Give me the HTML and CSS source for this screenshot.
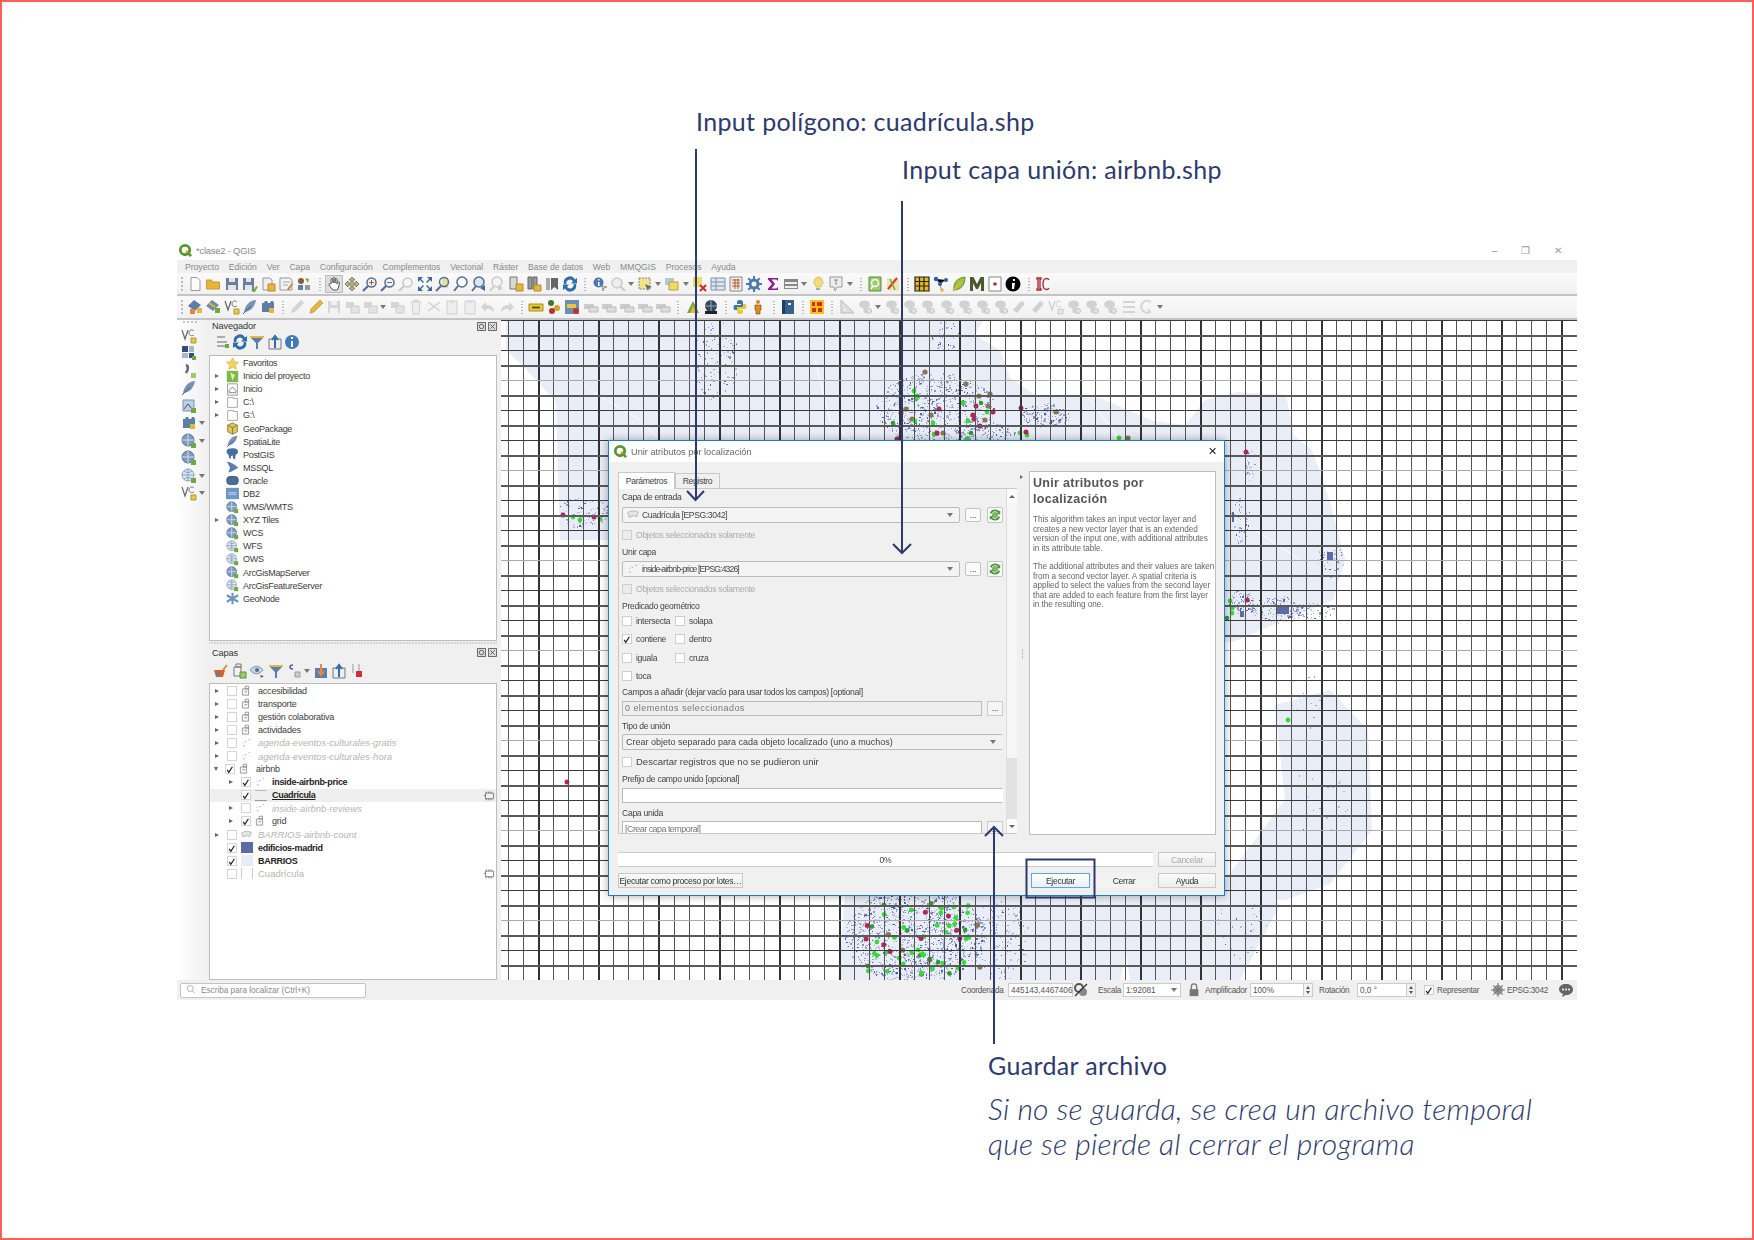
FILE: index.html
```html
<!DOCTYPE html>
<html lang="es">
<head>
<meta charset="utf-8">
<title>QGIS - Unir atributos por localización</title>
<link rel="stylesheet" href="styles.css">
</head>
<body>
<svg class="defs" aria-hidden="true">
  <symbol id="logo" viewBox="0 0 16 16"><circle cx="7.5" cy="7.5" r="5" fill="none" stroke="#589632" stroke-width="3"/><path d="M9 9l5 5" stroke="#589632" stroke-width="3"/><circle cx="9.5" cy="9.5" r="1.4" fill="#ee9a1e"/></symbol>
  <symbol id="new" viewBox="0 0 16 16"><path d="M4 1.5h6l3 3v10H4z" fill="#fff" stroke="#999"/></symbol>
  <symbol id="open" viewBox="0 0 16 16"><path d="M1.5 13V4h5l1 2h7v7z" fill="#e6b53c" stroke="#c79a2c"/></symbol>
  <symbol id="save" viewBox="0 0 16 16"><path d="M2 2h12v12H2z" fill="#6d7f97"/><path d="M5 2h6v4H5zM4 9h8v5H4z" fill="#dfe5ec"/></symbol>
  <symbol id="saveas" viewBox="0 0 16 16"><path d="M1 2h11v12H1z" fill="#6d7f97"/><path d="M4 2h5v4H4zM3 9h7v5H3z" fill="#dfe5ec"/><path d="M10 14l2 1.5 3-5" fill="none" stroke="#6fa83f" stroke-width="2"/></symbol>
  <symbol id="docy" viewBox="0 0 16 16"><path d="M3 2h7l2 2v10H3z" fill="#eee" stroke="#999"/><path d="M8 8h7v7H8z" fill="#e6b53c" stroke="#b78d23"/></symbol>
  <symbol id="print" viewBox="0 0 16 16"><path d="M2 2h10l2 2v10H2z" fill="#f4f4f4" stroke="#999"/><path d="M5 6h7M5 9h5" stroke="#9ab"/><path d="M9 13l5-6 1 1-4 6z" fill="#c5843c"/></symbol>
  <symbol id="style" viewBox="0 0 16 16"><circle cx="5" cy="5" r="3" fill="#8a5a3c"/><path d="M9 2l4 1-1 4z" fill="#6fa83f"/><path d="M2 9h5v5H2z" fill="#5b7fa8"/><path d="M9 9h5v5H9z" fill="#999"/></symbol>
  <symbol id="hand" viewBox="0 0 16 16"><path d="M5 8V3.500a1 1 0 012 0V7V2.500a1 1 0 012 0V7V3.500a1 1 0 012 0V8l1-2a1 1 0 011.500 1L12 13c-1 1.500-5 1.500-6 0L3 9c-.5-1 1-2 2-1z" fill="#fff" stroke="#555"/></symbol>
  <symbol id="pansel" viewBox="0 0 16 16"><path d="M8 1l3 3H9v3h3V5l3 3-3 3V9H9v3h2l-3 3-3-3h2V9H4v2L1 8l3-3v2h3V4H5z" fill="#e6b53c" stroke="#4f6f9a" stroke-width=".8"/></symbol>
  <symbol id="zin" viewBox="0 0 16 16"><circle cx="9.500" cy="6.500" r="4.500" fill="#f4f4f4" stroke="#4f6f9a" stroke-width="1.500"/><path d="M6 10l-5 5" stroke="#4f6f9a" stroke-width="2.200"/><path d="M7 6.500h5M9.500 4v5" stroke="#b5562c"/></symbol>
  <symbol id="zout" viewBox="0 0 16 16"><circle cx="9.500" cy="6.500" r="4.500" fill="#f4f4f4" stroke="#4f6f9a" stroke-width="1.500"/><path d="M6 10l-5 5" stroke="#4f6f9a" stroke-width="2.200"/><path d="M7 6.500h5" stroke="#b5562c"/></symbol>
  <symbol id="zfad" viewBox="0 0 16 16"><circle cx="9.500" cy="6.500" r="4.500" fill="#f6f6f6" stroke="#c9c9c9" stroke-width="1.500"/><path d="M6 10l-5 5" stroke="#c9c9c9" stroke-width="2"/></symbol>
  <symbol id="zfull" viewBox="0 0 16 16"><path d="M1 1h5L4 3l3 3-1 1-3-3-2 2zM15 1v5l-2-2-3 3-1-1 3-3-2-2zM1 15v-5l2 2 3-3 1 1-3 3 2 2zM15 15h-5l2-2-3-3 1-1 3 3 2-2z" fill="#3f6a9a"/></symbol>
  <symbol id="zlay" viewBox="0 0 16 16"><path d="M7 1h6v11H7z" fill="#eadf9a"/><circle cx="9" cy="6" r="4.500" fill="none" stroke="#4f6f9a" stroke-width="1.500"/><path d="M6 10l-5 5" stroke="#4f6f9a" stroke-width="2"/></symbol>
  <symbol id="zsel" viewBox="0 0 16 16"><circle cx="9" cy="6" r="5" fill="#fff" stroke="#4f6f9a" stroke-width="1.500"/><path d="M5 10l-4 5" stroke="#4f6f9a" stroke-width="2"/></symbol>
  <symbol id="zlast" viewBox="0 0 16 16"><circle cx="8" cy="6" r="5" fill="#dfe6ee" stroke="#4f6f9a" stroke-width="1.500"/><path d="M5 10l-4 5" stroke="#4f6f9a" stroke-width="2"/><path d="M9 12l5-3v6z" fill="#3f6a9a"/></symbol>
  <symbol id="znext" viewBox="0 0 16 16"><circle cx="8" cy="6" r="5" fill="#f4f4f4" stroke="#ccc" stroke-width="1.500"/><path d="M5 10l-4 5" stroke="#ccc" stroke-width="2"/><path d="M14 12l-5-3v6z" fill="#ccc"/></symbol>
  <symbol id="mapv" viewBox="0 0 16 16"><path d="M2 1h7v12H2z" fill="#d8d8d8" stroke="#777"/><path d="M8 8h7v7H8z" fill="#e6b53c" stroke="#b78d23"/></symbol>
  <symbol id="map3" viewBox="0 0 16 16"><path d="M2 1h4v12H2zM7 1h4v12H7z" fill="#999" stroke="#666"/><path d="M8 9h7v6H8z" fill="#e6b53c" stroke="#b78d23"/></symbol>
  <symbol id="book" viewBox="0 0 16 16"><path d="M2 2h4v12H2z" fill="#aaa"/><path d="M7 2h7v12l-3.500-3L7 14z" fill="#666"/></symbol>
  <symbol id="refresh" viewBox="0 0 16 16"><path d="M13 3.500A6 6 0 002 8h2.500A3.500 3.500 0 0111 5.500L9 7.500h6V2zM3 12.500A6 6 0 0014 8h-2.500A3.500 3.500 0 015 10.500l2-2H1V14z" fill="#2f6da8"/></symbol>
  <symbol id="ident" viewBox="0 0 16 16"><circle cx="6.500" cy="6.500" r="5" fill="#4f79aa"/><path d="M6 3h1.500v1.500H6zM6 6h1.500v4H6z" fill="#fff"/><path d="M10 10l5 1-3 1-1 3z" fill="#ddd" stroke="#666" stroke-width=".6"/></symbol>
  <symbol id="selfad" viewBox="0 0 16 16"><circle cx="7" cy="7" r="5" fill="#eee" stroke="#ccc" stroke-width="1.500"/><path d="M10 10l5 5" stroke="#ccc" stroke-width="2"/></symbol>
  <symbol id="sel" viewBox="0 0 16 16"><path d="M2 2h11v11H2z" fill="#f2e48e" stroke="#888" stroke-dasharray="2 1"/><path d="M8 8l7 3-3 1-1 3z" fill="#666"/></symbol>
  <symbol id="sel2" viewBox="0 0 16 16"><path d="M1 2h9v7H1z" fill="#b5c7dc"/><path d="M5 6h9v8H5z" fill="#efdc68" stroke="#b8a33a"/></symbol>
  <symbol id="desel" viewBox="0 0 16 16"><path d="M1 1h9v10H1z" fill="#efdc68"/><path d="M8 9l6 6M14 9l-6 6" stroke="#cf2a2a" stroke-width="2"/></symbol>
  <symbol id="table" viewBox="0 0 16 16"><path d="M1 2h14v12H1z" fill="#dfe6ef" stroke="#7d93ad"/><path d="M1 6h14M1 10h14M6 2v12" stroke="#7d93ad"/></symbol>
  <symbol id="calc" viewBox="0 0 16 16"><path d="M2 1h12v14H2z" fill="#eee" stroke="#888"/><path d="M4 4h8M4 7h8M4 10h8M7 3v10M10 3v10" stroke="#b5562c"/></symbol>
  <symbol id="gear" viewBox="0 0 16 16"><circle cx="8" cy="8" r="4" fill="none" stroke="#4f79aa" stroke-width="3"/><path d="M8 0v3M8 13v3M0 8h3M13 8h3M2.300 2.300l2 2M11.700 11.700l2 2M13.700 2.300l-2 2M4.300 11.700l-2 2" stroke="#4f79aa" stroke-width="2"/></symbol>
  <symbol id="sum" viewBox="0 0 16 16"><path d="M3 2h10v3l-1.500-1.500H6.500L10 8l-3.500 4.500h5L13 11v3H3v-1.500L7 8 3 3.500z" fill="#8d1c8d"/></symbol>
  <symbol id="stat" viewBox="0 0 16 16"><path d="M1 3h14v10H1z" fill="#888"/><path d="M2 6h12v2H2zM2 10h12v2H2z" fill="#eee"/></symbol>
  <symbol id="tip" viewBox="0 0 16 16"><path d="M8 1a5 5 0 013 9v1H6v-1A5 5 0 018 1z" fill="#f0dc7a" stroke="#cfb850" stroke-width=".7"/><path d="M6 12h4v2H6z" fill="#aaa"/></symbol>
  <symbol id="note" viewBox="0 0 16 16"><path d="M2 1h12v10H9l-2 4-1-4H2z" fill="#eee" stroke="#999"/><path d="M6 4h4M8 4v5" stroke="#888"/></symbol>
  <symbol id="grn" viewBox="0 0 16 16"><path d="M2 1h12v14H2z" fill="#9ccb6f" stroke="#5f8f3a"/><circle cx="8" cy="7" r="3.500" fill="none" stroke="#fff" stroke-width="1.500"/><path d="M6 10l-2 3" stroke="#fff" stroke-width="1.500"/></symbol>
  <symbol id="foldmap" viewBox="0 0 16 16"><path d="M2 2l4 1 4-1 4 1v12l-4-1-4 1-4-1z" fill="#efe3b0"/><path d="M3 13l9-11" stroke="#d8392f" stroke-width="2"/><path d="M5 3l5 11" stroke="#6fa83f" stroke-width="1.500"/></symbol>
  <symbol id="grid" viewBox="0 0 16 16"><path d="M1 1h14v14H1z" fill="#e5b91f"/><path d="M1 1h14v14H1zM1 5.500h14M1 10h14M5.500 1v14M10 1v14" fill="none" stroke="#222" stroke-width="1.200"/></symbol>
  <symbol id="net" viewBox="0 0 16 16"><path d="M3 3l4 5 6-4M7 8l1 5" stroke="#7b99bc"/><circle cx="3" cy="3" r="2.200" fill="#2f5f9e"/><circle cx="13" cy="4" r="2" fill="#2f5f9e"/><circle cx="7" cy="8" r="2" fill="#2f5f9e"/><circle cx="9" cy="14" r="1.800" fill="#e6b53c"/></symbol>
  <symbol id="leaf" viewBox="0 0 16 16"><path d="M14 1C6 2 2 7 3 14c7 0 11-5 11-13z" fill="#9cc43a" stroke="#5f8f3a"/><path d="M2 15l8-9" stroke="#e6b53c" stroke-width="1.500"/></symbol>
  <symbol id="em" viewBox="0 0 16 16"><path d="M1 15V1h3.500L8 8l3.500-7H15v14h-3V7l-3 6H7L4 7v8z" fill="#4a5a2a"/></symbol>
  <symbol id="rdot" viewBox="0 0 16 16"><path d="M2 1h12v14H2z" fill="#fff" stroke="#888"/><circle cx="8" cy="8" r="1.800" fill="#b03030"/></symbol>
  <symbol id="ibl" viewBox="0 0 16 16"><circle cx="8" cy="8" r="7.500" fill="#000"/><path d="M8 3h2v2H8zM7 7h3l-1 6H7z" fill="#fff"/></symbol>
  <symbol id="ic" viewBox="0 0 16 16"><path d="M2 2h4v1H5v10h1v1H2v-1h1V3H2zM14 4c-1-2-6-3-6 4 0 7 5 6 6 4" fill="none" stroke="#a83232" stroke-width="1.400"/></symbol>
  <symbol id="addcap" viewBox="0 0 16 16"><path d="M7 1l7 5-6 6-7-5z" fill="#5b7fa8"/><path d="M3 10h5v5H3z" fill="#e6883c"/><path d="M10 9h5v5h-5z" fill="#e6b53c"/></symbol>
  <symbol id="addcap2" viewBox="0 0 16 16"><path d="M7 1l7 5-6 6-7-5z" fill="#6f8ea8"/><path d="M4 4l6 4" stroke="#e6b53c" stroke-width="2"/><path d="M10 9h5v5h-5z" fill="#6fa83f"/></symbol>
  <symbol id="vc" viewBox="0 0 16 16"><path d="M1 2l3 9 3-9" fill="none" stroke="#666" stroke-width="1.200"/><path d="M13 3c-2-2-5-1-5 2s3 3 5 2" fill="none" stroke="#777"/><path d="M10 10h5v5h-5z" fill="#e6c84a" stroke="#b8982e"/></symbol>
  <symbol id="feather" viewBox="0 0 16 16"><path d="M14 1C8 1 3 6 2 13c6 0 11-5 12-12z" fill="#7894b4"/><path d="M1 15l8-8" stroke="#44607f"/></symbol>
  <symbol id="db" viewBox="0 0 16 16"><path d="M2 4h2l1-2h2l1 2h2l1-2h2l1 2v9H2z" fill="#5b7fa8"/><path d="M9 9h5v5H9z" fill="#e6b53c"/></symbol>
  <symbol id="penfad" viewBox="0 0 16 16"><path d="M12 1l3 3-9 9-4 1 1-4z" fill="#d4d4d4"/></symbol>
  <symbol id="pen" viewBox="0 0 16 16"><path d="M12 1l3 3-9 9-4 1 1-4z" fill="#e6b53c" stroke="#a8842b" stroke-width=".6"/></symbol>
  <symbol id="savef" viewBox="0 0 16 16"><path d="M2 2h12v12H2z" fill="#d6d6d6"/><path d="M5 2h6v4H5zM4 9h8v5H4z" fill="#f2f2f2"/></symbol>
  <symbol id="fad1" viewBox="0 0 16 16"><path d="M2 3h8v6H2z" fill="#d6d6d6"/><path d="M7 7h8v7H7z" fill="#e4e4e4" stroke="#ccc"/></symbol>
  <symbol id="trash" viewBox="0 0 16 16"><path d="M3 3h10M6 3V1h4v2M4 3l1 12h6l1-12" fill="#eee" stroke="#cfcfcf"/></symbol>
  <symbol id="cut" viewBox="0 0 16 16"><path d="M2 3l12 9M14 3L2 12" stroke="#d4d4d4" stroke-width="1.500"/></symbol>
  <symbol id="paste" viewBox="0 0 16 16"><path d="M3 2h10v13H3z" fill="#eee" stroke="#d0d0d0"/><path d="M6 1h4v3H6z" fill="#ddd"/></symbol>
  <symbol id="undo" viewBox="0 0 16 16"><path d="M6 3L1 8l5 5v-3c3 0 5 0 8 3 0-5-3-7-8-7z" fill="#d4d4d4"/></symbol>
  <symbol id="redo" viewBox="0 0 16 16"><path d="M10 3l5 5-5 5v-3c-3 0-5 0-8 3 0-5 3-7 8-7z" fill="#d4d4d4"/></symbol>
  <symbol id="lbl" viewBox="0 0 16 16"><path d="M1 5h14v7H1z" fill="#e8c83a" stroke="#a88c1e"/><path d="M4 8.500h8" stroke="#6b5a12" stroke-width="2"/></symbol>
  <symbol id="pts" viewBox="0 0 16 16"><circle cx="5" cy="4" r="3" fill="#3f7a2f"/><circle cx="11" cy="9" r="3" fill="#d3a520"/><circle cx="6" cy="12" r="3" fill="#b33"/></symbol>
  <symbol id="lblb" viewBox="0 0 16 16"><path d="M1 1h14v14H1z" fill="#6d8fb5"/><path d="M3 5h9v4H3z" fill="#e8c83a"/><circle cx="12" cy="12" r="3" fill="#b33"/></symbol>
  <symbol id="lblf" viewBox="0 0 16 16"><path d="M1 5h10v5H1z" fill="#ccc"/><path d="M6 8h9v5H6z" fill="#ddd" stroke="#bbb"/></symbol>
  <symbol id="tri" viewBox="0 0 16 16"><path d="M8 2l6 12H2z" fill="#6fa83f"/><path d="M8 6l3 8H5z" fill="#e6b53c"/></symbol>
  <symbol id="globed" viewBox="0 0 16 16"><circle cx="8" cy="7" r="6" fill="#33475f"/><path d="M2 7h12M8 1v12" stroke="#9ab"/><path d="M2 12h12v3H2z" fill="#222"/></symbol>
  <symbol id="py" viewBox="0 0 16 16"><path d="M8 1c-3 0-3 1-3 3v1h4v1H3c-2 0-2 5 0 5h2V8h5c1 0 1-1 1-2V3c0-1-1-2-3-2z" fill="#3d75a6"/><path d="M8 15c3 0 3-1 3-3v-1H7v-1h6c2 0 2-5 0-5h-2v3H6c-1 0-1 1-1 2v3c0 1 1 2 3 2z" fill="#e8c83a"/></symbol>
  <symbol id="man" viewBox="0 0 16 16"><circle cx="8" cy="3" r="2" fill="#d2862c"/><path d="M5 6h6v5H10v4H6v-4H5z" fill="#e28b1c" stroke="#6a4511" stroke-width=".6"/></symbol>
  <symbol id="bluebook" viewBox="0 0 16 16"><path d="M2 1h12v14H2z" fill="#35618f"/><path d="M2 1h3v14H2z" fill="#1f3f60"/><path d="M8 4h3v2H8z" fill="#fff"/></symbol>
  <symbol id="mm" viewBox="0 0 16 16"><path d="M1 1h14v14H1z" fill="#f2c31b"/><path d="M3 3h3v4H3zM8 3h5v4H8zM3 9h4v4H3zM9 9h4v4H9z" fill="#d62b1f"/></symbol>
  <symbol id="ruler" viewBox="0 0 16 16"><path d="M2 1v13h13z" fill="#ddd" stroke="#bbb"/><path d="M5 9v3h3z" fill="#f0f0f0"/></symbol>
  <symbol id="blob" viewBox="0 0 16 16"><path d="M3 3c2-2 7-2 9 0 2 3 0 6-2 6l1 5H7L6 9C3 9 1 6 3 3z" fill="#d2d2d2"/><circle cx="12" cy="12" r="2.500" fill="#e4e4e4" stroke="#c4c4c4"/></symbol>
  <symbol id="blob2" viewBox="0 0 16 16"><path d="M2 11L9 3c3-2 5 0 4 3L6 14z" fill="#d2d2d2"/></symbol>
  <symbol id="vcf" viewBox="0 0 16 16"><path d="M1 2l3 9 3-9" fill="none" stroke="#ccc" stroke-width="1.200"/><path d="M13 3c-2-2-5-1-5 2s3 3 5 2" fill="none" stroke="#ccc"/><path d="M10 10h5v5h-5z" fill="#e4e4e4" stroke="#ccc"/></symbol>
  <symbol id="lines" viewBox="0 0 16 16"><path d="M2 3h12M2 8h12M2 13h12" stroke="#d4d4d4" stroke-width="2"/></symbol>
  <symbol id="rotf" viewBox="0 0 16 16"><path d="M12 3a6 6 0 10-1 10L9 10" fill="none" stroke="#d4d4d4" stroke-width="2"/></symbol>
  <symbol id="tilesg" viewBox="0 0 16 16"><path d="M1 1h6v6H1zM8 8h5v5H8z" fill="#2f4f76"/><path d="M8 1h5v6H8zM1 8h6v5H1z" fill="#a6b8cc"/><path d="M11 11h4v4h-4z" fill="#6fa83f"/></symbol>
  <symbol id="pg" viewBox="0 0 16 16"><path d="M3 1c3-1 9-1 11 1s0 6-2 6l-1 6-2-1-1-4-2 1v3H4l-1-5C0 7 0 2 3 1z" fill="#47709f"/></symbol>
  <symbol id="vt" viewBox="0 0 16 16"><path d="M5 2c3 1 2 5 0 8" fill="none" stroke="#667" stroke-width="2.500"/><path d="M10 10h5v5h-5z" fill="#9ccb6f"/></symbol>
  <symbol id="raster" viewBox="0 0 16 16"><path d="M2 2h11v11H2z" fill="#bcd0e6" stroke="#7d93ad"/><path d="M3 11l4-5 4 5" fill="none" stroke="#547"/><path d="M10 10h5v5h-5z" fill="#6fa83f"/></symbol>
  <symbol id="globe" viewBox="0 0 16 16"><circle cx="7" cy="7" r="6" fill="#7d9cbe" stroke="#4f6f9a"/><path d="M1 7h12M7 1v12" stroke="#dde"/><path d="M10 10h5v5h-5z" fill="#6fa83f"/></symbol>
  <symbol id="globel" viewBox="0 0 16 16"><circle cx="7" cy="7" r="6" fill="#dce6f1" stroke="#8aa3bf"/><path d="M1 7h12M7 1v12M3 3c3 2 5 2 8 0M3 11c3-2 5-2 8 0" stroke="#8aa3bf" fill="none"/><path d="M10 10h5v5h-5z" fill="#6fa83f"/></symbol>
  <symbol id="star" viewBox="0 0 16 16"><path d="M8 1l2.200 4.800 5.200.6-3.900 3.500 1.100 5.100L8 12.400 3.400 15l1.100-5.100L.6 6.400l5.200-.6z" fill="#f3d55b" stroke="#c9a22c" stroke-width=".7"/></symbol>
  <symbol id="proj" viewBox="0 0 16 16"><path d="M1 1h14v14H1z" fill="#7cb84a"/><path d="M5 3l6 3-3 7z" fill="#e8f0a0"/></symbol>
  <symbol id="home" viewBox="0 0 16 16"><path d="M2 1h12v14H2z" fill="#fff" stroke="#888"/><path d="M4 9l4-4 4 4v3H4z" fill="none" stroke="#666"/></symbol>
  <symbol id="folder" viewBox="0 0 16 16"><path d="M2 2h7v1h5v11H2z" fill="#fff" stroke="#999"/></symbol>
  <symbol id="gpkg" viewBox="0 0 16 16"><path d="M8 1l6 3v8l-6 3-6-3V4z" fill="#e6c84a" stroke="#8a7420"/><path d="M2 4l6 3 6-3M8 7v8" fill="none" stroke="#4f6f9a"/></symbol>
  <symbol id="mssql" viewBox="0 0 16 16"><path d="M1 1c5 0 9 3 14 7-4 3-9 6-12 6l2-6z" fill="#5b7fa8"/></symbol>
  <symbol id="oracle" viewBox="0 0 16 16"><rect x="1" y="3" width="14" height="10" rx="4" fill="#4a6f97" stroke="#2f4d70"/></symbol>
  <symbol id="db2" viewBox="0 0 16 16"><path d="M0 1h16v14H0z" fill="#6f97c6"/><path d="M3 7h10M3 9h10" stroke="#cfdcee"/></symbol>
  <symbol id="geonode" viewBox="0 0 16 16"><path d="M8 1v14M1 4l14 8M1 12l14-8" stroke="#6a93bd" stroke-width="2.500"/></symbol>
  <symbol id="collapse" viewBox="0 0 16 16"><path d="M3 3h8M3 12h8M3 8h10" stroke="#666"/><path d="M11 10h4v4h-4z" fill="#6fa83f"/></symbol>
  <symbol id="filter" viewBox="0 0 16 16"><path d="M1 2h14v2H1z" fill="#e6b53c"/><path d="M2 4h12L9 9v6H7V9z" fill="#5b7fa8"/></symbol>
  <symbol id="collall" viewBox="0 0 16 16"><path d="M2 5h12v10H2z" fill="#eee" stroke="#777"/><path d="M8 14V4M5 6l3-4 3 4" fill="none" stroke="#2f6da8" stroke-width="2"/></symbol>
  <symbol id="info" viewBox="0 0 16 16"><circle cx="8" cy="8" r="7" fill="#3f7ab5"/><path d="M7 3h2v2H7zM7 7h2v6H7z" fill="#fff"/></symbol>
  <symbol id="paint" viewBox="0 0 16 16"><path d="M1 7h11l-2 7H3z" fill="#d8602a"/><path d="M3 9h4v3H3z" fill="#5b7fa8"/><path d="M10 7l4-5" stroke="#c79a2c" stroke-width="2"/></symbol>
  <symbol id="addg" viewBox="0 0 16 16"><path d="M3 4h7v9H3zM5 1h5v3H5z" fill="#f2f2f2" stroke="#777"/><path d="M9 9h6v6H9z" fill="#9ccb6f" stroke="#5f8f3a"/></symbol>
  <symbol id="eye" viewBox="0 0 16 16"><path d="M1 7c4-5 9-5 13 0-4 5-9 5-13 0z" fill="#c7d4e2" stroke="#7d93ad"/><circle cx="8" cy="7" r="2" fill="#4f6f9a"/><path d="M11 12l4 1-3 2z" fill="#666"/></symbol>
  <symbol id="exprf" viewBox="0 0 16 16"><path d="M7 2C3 2 3 6 7 6" fill="none" stroke="#6a4f96" stroke-width="1.500"/><path d="M9 9h5v5H9z" fill="#ccc" stroke="#999"/></symbol>
  <symbol id="expall" viewBox="0 0 16 16"><path d="M2 5h12v10H2z" fill="#5b7fa8"/><path d="M8 1v10M5 8l3 4 3-4" fill="none" stroke="#e6883c" stroke-width="2"/></symbol>
  <symbol id="rm" viewBox="0 0 16 16"><path d="M3 1v9M9 1v9" stroke="#999"/><path d="M6 8h6v6H6z" fill="#d62b3b"/></symbol>
  <symbol id="groupi" viewBox="0 0 16 16"><path d="M2 5h9v9H2zM6 1h5v4H6z" fill="#f6f6f6" stroke="#777"/><path d="M5 9h4" stroke="#777"/></symbol>
  <symbol id="ptsf" viewBox="0 0 16 16"><circle cx="4" cy="12" r="1" fill="#aaa"/><circle cx="7" cy="6" r="1" fill="#aaa"/><circle cx="12" cy="3" r="1" fill="#aaa"/><circle cx="3" cy="7" r=".8" fill="#bbb"/></symbol>
  <symbol id="indic" viewBox="0 0 16 16"><path d="M3 5h10v7H3z" fill="none" stroke="#667"/><path d="M4 3v2M7 3v2M10 3v2M4 12v2M7 12v2M10 12v2M1 8h2" stroke="#667"/></symbol>
  <symbol id="polyc" viewBox="0 0 16 16"><path d="M1 5c3-3 10-3 14-1l-2 6-5-1-5 2z" fill="#e4e4e4" stroke="#aaa"/></symbol>
  <symbol id="chk" viewBox="0 0 10 10"><path d="M1.500 5.500l2 3 4.500-7" fill="none" stroke="#222" stroke-width="1.500"/></symbol>
  <symbol id="runb" viewBox="0 0 16 16"><circle cx="8" cy="8" r="3.500" fill="#7fb56a"/><path d="M12.500 5A5.500 5.500 0 003 6M3.500 11A5.500 5.500 0 0013 10" fill="none" stroke="#4f9a3a" stroke-width="2.200"/><path d="M14 2.500v4.500h-4.500zM2 13.500V9h4.500z" fill="#4f9a3a"/></symbol>
  <symbol id="mag" viewBox="0 0 16 16"><circle cx="7" cy="6" r="4" fill="none" stroke="#999"/><path d="M10 9l3 3" stroke="#999"/></symbol>
  <symbol id="lock" viewBox="0 0 16 16"><path d="M5 7V4a3 3 0 016 0v3" fill="none" stroke="#777" stroke-width="1.500"/><path d="M3 7h10v8H3z" fill="#777"/></symbol>
  <symbol id="crs" viewBox="0 0 16 16"><circle cx="8" cy="8" r="5" fill="#999"/><path d="M1 8h14M8 1v14M3 3l10 10M13 3L3 13" stroke="#777"/></symbol>
  <symbol id="msg" viewBox="0 0 16 16"><path d="M8 2c4 0 7 2 7 5.500S12 13 8 13l-4 2 1-3C3 11 1 10 1 7.500 1 4 4 2 8 2z" fill="#666"/><circle cx="5" cy="7.500" r="1" fill="#fff"/><circle cx="8" cy="7.500" r="1" fill="#fff"/><circle cx="11" cy="7.500" r="1" fill="#fff"/></symbol>
  <symbol id="toggle" viewBox="0 0 16 16"><circle cx="6" cy="6" r="4" fill="none" stroke="#555" stroke-width="2"/><circle cx="10" cy="10" r="4" fill="#888"/><path d="M2 14L14 2" stroke="#333" stroke-width="1.300"/></symbol>
  <symbol id="dock" viewBox="0 0 10 10"><path d="M.5.5h9v9h-9z" fill="#ddd" stroke="#555"/><path d="M2.500 2.500l5 5M7.500 2.500l-5 5" stroke="#555"/></symbol>
  <symbol id="dock2" viewBox="0 0 10 10"><path d="M.5.5h9v9h-9z" fill="#ddd" stroke="#555"/><circle cx="5" cy="5" r="2.500" fill="none" stroke="#555"/></symbol>
</svg>

<main class="page">
  <section class="qgis">
    <header class="titlebar">
      <svg class="logo"><use href="#logo"/></svg>
      <span class="title">*clase2 - QGIS</span>
      <span class="winbtns"><span>–</span><span>❐</span><span>✕</span></span>
    </header>
    <nav class="menubar">
      <span>Proyecto</span><span>Edición</span><span>Ver</span><span>Capa</span><span>Configuración</span><span>Complementos</span><span>Vectorial</span><span>Ráster</span><span>Base de datos</span><span>Web</span><span>MMQGIS</span><span>Procesos</span><span>Ayuda</span>
    </nav>
    <div class="toolbar">
      <i class="grip"></i>
      <svg class="i"><use href="#new"/></svg><svg class="i"><use href="#open"/></svg><svg class="i"><use href="#save"/></svg><svg class="i"><use href="#saveas"/></svg><svg class="i"><use href="#docy"/></svg><svg class="i"><use href="#print"/></svg><svg class="i"><use href="#style"/></svg>
      <i class="sep"></i>
      <span class="active"><svg class="i"><use href="#hand"/></svg></span><svg class="i"><use href="#pansel"/></svg><svg class="i"><use href="#zin"/></svg><svg class="i"><use href="#zout"/></svg><svg class="i"><use href="#zfad"/></svg><svg class="i"><use href="#zfull"/></svg><svg class="i"><use href="#zlay"/></svg><svg class="i"><use href="#zsel"/></svg><svg class="i"><use href="#zlast"/></svg><svg class="i"><use href="#znext"/></svg><svg class="i"><use href="#mapv"/></svg><svg class="i"><use href="#map3"/></svg><svg class="i"><use href="#book"/></svg><svg class="i"><use href="#refresh"/></svg>
      <i class="sep"></i>
      <svg class="i"><use href="#ident"/></svg><svg class="i"><use href="#selfad"/></svg><b class="dd"></b><svg class="i"><use href="#sel"/></svg><b class="dd"></b><svg class="i"><use href="#sel2"/></svg><b class="dd"></b><svg class="i"><use href="#desel"/></svg><svg class="i"><use href="#table"/></svg><svg class="i"><use href="#calc"/></svg><svg class="i"><use href="#gear"/></svg><svg class="i"><use href="#sum"/></svg><svg class="i"><use href="#stat"/></svg><b class="dd"></b><svg class="i"><use href="#tip"/></svg><svg class="i"><use href="#note"/></svg><b class="dd"></b>
      <i class="sep"></i>
      <svg class="i"><use href="#grn"/></svg><svg class="i"><use href="#foldmap"/></svg>
      <i class="sep"></i>
      <svg class="i"><use href="#grid"/></svg><svg class="i"><use href="#net"/></svg><svg class="i"><use href="#leaf"/></svg><svg class="i"><use href="#em"/></svg><svg class="i"><use href="#rdot"/></svg><svg class="i"><use href="#ibl"/></svg>
      <i class="sep"></i>
      <svg class="i"><use href="#ic"/></svg>
    </div>
    <div class="toolbar">
      <i class="grip"></i>
      <svg class="i"><use href="#addcap"/></svg><svg class="i"><use href="#addcap2"/></svg><svg class="i"><use href="#vc"/></svg><svg class="i"><use href="#feather"/></svg><svg class="i"><use href="#db"/></svg>
      <i class="sep"></i>
      <svg class="i"><use href="#penfad"/></svg><svg class="i"><use href="#pen"/></svg><svg class="i"><use href="#savef"/></svg><svg class="i"><use href="#fad1"/></svg><svg class="i"><use href="#fad1"/></svg><b class="dd"></b><svg class="i"><use href="#fad1"/></svg><svg class="i"><use href="#trash"/></svg><svg class="i"><use href="#cut"/></svg><svg class="i"><use href="#paste"/></svg><svg class="i"><use href="#paste"/></svg><svg class="i"><use href="#undo"/></svg><svg class="i"><use href="#redo"/></svg>
      <i class="sep"></i>
      <svg class="i"><use href="#lbl"/></svg><svg class="i"><use href="#pts"/></svg><svg class="i"><use href="#lblb"/></svg><svg class="i"><use href="#lblf"/></svg><svg class="i"><use href="#lblf"/></svg><svg class="i"><use href="#lblf"/></svg><svg class="i"><use href="#lblf"/></svg><svg class="i"><use href="#lblf"/></svg>
      <i class="sep"></i>
      <svg class="i"><use href="#tri"/></svg><svg class="i"><use href="#globed"/></svg>
      <i class="sep"></i>
      <svg class="i"><use href="#py"/></svg><svg class="i"><use href="#man"/></svg>
      <i class="sep"></i>
      <svg class="i"><use href="#bluebook"/></svg>
      <i class="sep"></i>
      <svg class="i"><use href="#mm"/></svg>
      <i class="sep"></i>
      <svg class="i"><use href="#ruler"/></svg><svg class="i"><use href="#blob"/></svg><b class="dd"></b><svg class="i"><use href="#blob"/></svg><svg class="i"><use href="#blob"/></svg><svg class="i"><use href="#blob"/></svg><svg class="i"><use href="#blob"/></svg><svg class="i"><use href="#blob"/></svg><svg class="i"><use href="#blob"/></svg><svg class="i"><use href="#blob"/></svg><svg class="i"><use href="#blob2"/></svg><svg class="i"><use href="#blob2"/></svg><svg class="i"><use href="#vcf"/></svg><svg class="i"><use href="#blob"/></svg><svg class="i"><use href="#blob"/></svg><svg class="i"><use href="#blob"/></svg><svg class="i"><use href="#lines"/></svg><svg class="i"><use href="#rotf"/></svg><b class="dd"></b>
    </div>

    <div class="workspace">
      <aside class="sidestrip">
        <i class="hgrip"></i>
        <div class="sideitem"><svg class="i"><use href="#vc"/></svg></div>
        <div class="sideitem"><svg class="i"><use href="#tilesg"/></svg></div>
        <div class="sideitem"><svg class="i"><use href="#vt"/></svg></div>
        <div class="sideitem"><svg class="i"><use href="#feather"/></svg></div>
        <div class="sideitem"><svg class="i"><use href="#raster"/></svg></div>
        <div class="sideitem"><svg class="i"><use href="#db"/></svg><b class="dd"></b></div>
        <div class="sideitem"><svg class="i"><use href="#globe"/></svg><b class="dd"></b></div>
        <div class="sideitem"><svg class="i"><use href="#globe"/></svg></div>
        <div class="sideitem"><svg class="i"><use href="#globel"/></svg><b class="dd"></b></div>
        <div class="sideitem"><svg class="i"><use href="#vc"/></svg><b class="dd"></b></div>
      </aside>

      <div class="panels">
        <section class="panel nav-panel">
          <div class="panel-head"><span>Navegador</span><span class="dockbtns"><svg><use href="#dock2"/></svg><svg><use href="#dock"/></svg></span></div>
          <div class="paneltools"><svg class="i"><use href="#collapse"/></svg><svg class="i"><use href="#refresh"/></svg><svg class="i"><use href="#filter"/></svg><svg class="i"><use href="#collall"/></svg><svg class="i"><use href="#info"/></svg></div>
          <div class="tree nav-tree">
            <div class="row"><b class="arr none"></b><svg class="ti"><use href="#star"/></svg><span>Favoritos</span></div>
            <div class="row"><b class="arr"></b><svg class="ti"><use href="#proj"/></svg><span>Inicio del proyecto</span></div>
            <div class="row"><b class="arr"></b><svg class="ti"><use href="#home"/></svg><span>Inicio</span></div>
            <div class="row"><b class="arr"></b><svg class="ti"><use href="#folder"/></svg><span>C:\</span></div>
            <div class="row"><b class="arr"></b><svg class="ti"><use href="#folder"/></svg><span>G:\</span></div>
            <div class="row"><b class="arr none"></b><svg class="ti"><use href="#gpkg"/></svg><span>GeoPackage</span></div>
            <div class="row"><b class="arr none"></b><svg class="ti"><use href="#feather"/></svg><span>SpatiaLite</span></div>
            <div class="row"><b class="arr none"></b><svg class="ti"><use href="#pg"/></svg><span>PostGIS</span></div>
            <div class="row"><b class="arr none"></b><svg class="ti"><use href="#mssql"/></svg><span>MSSQL</span></div>
            <div class="row"><b class="arr none"></b><svg class="ti"><use href="#oracle"/></svg><span>Oracle</span></div>
            <div class="row"><b class="arr none"></b><svg class="ti"><use href="#db2"/></svg><span>DB2</span></div>
            <div class="row"><b class="arr none"></b><svg class="ti"><use href="#globe"/></svg><span>WMS/WMTS</span></div>
            <div class="row"><b class="arr"></b><svg class="ti"><use href="#globe"/></svg><span>XYZ Tiles</span></div>
            <div class="row"><b class="arr none"></b><svg class="ti"><use href="#globe"/></svg><span>WCS</span></div>
            <div class="row"><b class="arr none"></b><svg class="ti"><use href="#globel"/></svg><span>WFS</span></div>
            <div class="row"><b class="arr none"></b><svg class="ti"><use href="#globel"/></svg><span>OWS</span></div>
            <div class="row"><b class="arr none"></b><svg class="ti"><use href="#globe"/></svg><span>ArcGisMapServer</span></div>
            <div class="row"><b class="arr none"></b><svg class="ti"><use href="#globel"/></svg><span>ArcGisFeatureServer</span></div>
            <div class="row"><b class="arr none"></b><svg class="ti"><use href="#geonode"/></svg><span>GeoNode</span></div>
          </div>
        </section>
        <i class="splitter"></i>
        <section class="panel layer-panel">
          <div class="panel-head"><span>Capas</span><span class="dockbtns"><svg><use href="#dock2"/></svg><svg><use href="#dock"/></svg></span></div>
          <div class="paneltools"><svg class="i"><use href="#paint"/></svg><svg class="i"><use href="#addg"/></svg><svg class="i"><use href="#eye"/></svg><svg class="i"><use href="#filter"/></svg><svg class="i"><use href="#exprf"/></svg><b class="dd"></b><svg class="i"><use href="#expall"/></svg><svg class="i"><use href="#collall"/></svg><svg class="i"><use href="#rm"/></svg></div>
          <div class="tree layer-tree">
            <div class="row"><b class="arr"></b><i class="cb"></i><svg class="li"><use href="#groupi"/></svg><span>accesibilidad</span></div>
            <div class="row"><b class="arr"></b><i class="cb"></i><svg class="li"><use href="#groupi"/></svg><span>transporte</span></div>
            <div class="row"><b class="arr"></b><i class="cb"></i><svg class="li"><use href="#groupi"/></svg><span>gestión colaborativa</span></div>
            <div class="row"><b class="arr"></b><i class="cb"></i><svg class="li"><use href="#groupi"/></svg><span>actividades</span></div>
            <div class="row off"><b class="arr"></b><i class="cb"></i><svg class="li"><use href="#ptsf"/></svg><span>agenda-eventos-culturales-gratis</span></div>
            <div class="row off"><b class="arr"></b><i class="cb"></i><svg class="li"><use href="#ptsf"/></svg><span>agenda-eventos-culturales-hora</span></div>
            <div class="row"><b class="arr open"></b><i class="cb"><svg><use href="#chk"/></svg></i><svg class="li"><use href="#groupi"/></svg><span>airbnb</span></div>
            <div class="row lv2 bold"><b class="arr"></b><i class="cb"><svg><use href="#chk"/></svg></i><svg class="li"><use href="#ptsf"/></svg><span>inside-airbnb-price</span></div>
            <div class="row lv2 bold current"><b class="arr none"></b><i class="cb"><svg><use href="#chk"/></svg></i><i class="swatch line"></i><span class="ul">Cuadrícula</span><svg class="indic"><use href="#indic"/></svg></div>
            <div class="row lv2 off"><b class="arr"></b><i class="cb"></i><svg class="li"><use href="#ptsf"/></svg><span>inside-airbnb-reviews</span></div>
            <div class="row lv2"><b class="arr"></b><i class="cb"><svg><use href="#chk"/></svg></i><svg class="li"><use href="#groupi"/></svg><span>grid</span></div>
            <div class="row off"><b class="arr"></b><i class="cb"></i><svg class="li"><use href="#polyc"/></svg><span>BARRIOS-airbnb-count</span></div>
            <div class="row bold"><b class="arr none"></b><i class="cb"><svg><use href="#chk"/></svg></i><i class="swatch blue"></i><span>edificios-madrid</span></div>
            <div class="row bold"><b class="arr none"></b><i class="cb"><svg><use href="#chk"/></svg></i><i class="swatch pale"></i><span>BARRIOS</span></div>
            <div class="row off upright"><b class="arr none"></b><i class="cb"></i><i class="swatch empty"></i><span>Cuadrícula</span><svg class="indic"><use href="#indic"/></svg></div>
          </div>
        </section>
      </div>

      <div class="mapview"><canvas id="map" width="1076" height="660"></canvas></div>
    </div>

    <footer class="statusbar">
      <label class="locator"><svg><use href="#mag"/></svg><span>Escriba para localizar (Ctrl+K)</span></label>
      <div class="status-right">
        <span class="s-coord">Coordenada</span><span class="field f-coord">445143,4467406</span><svg class="i"><use href="#toggle"/></svg>
        <span class="s-esc">Escala</span><span class="field f-esc">1:92081<b class="dd"></b></span>
        <svg class="i s-lock"><use href="#lock"/></svg><span class="s-amp">Amplificador</span><span class="field f-amp">100%<i class="spin"></i></span>
        <span class="s-rot">Rotación</span><span class="field f-rot">0,0 °<i class="spin"></i></span>
        <i class="cb s-cb"><svg><use href="#chk"/></svg></i><span class="s-rep">Representar</span>
        <svg class="i s-crs"><use href="#crs"/></svg><span class="s-epsg">EPSG:3042</span><svg class="i s-msg"><use href="#msg"/></svg>
      </div>
    </footer>

    <section class="dialog">
      <header class="dlg-title"><svg class="logo"><use href="#logo"/></svg><span>Unir atributos por localización</span><b class="dlg-x">✕</b></header>
      <div class="dlg-body">
        <div class="dlg-left">
          <div class="tabs"><span class="tab on">Parámetros</span><span class="tab">Registro</span></div>
          <div class="pane">
            <div class="form">
              <div class="lbl first">Capa de entrada</div>
              <div class="ctlrow c-top"><div class="combo"><svg class="ci"><use href="#polyc"/></svg><span class="c1">Cuadrícula [EPSG:3042]</span><b class="dd"></b></div><span class="btn3">...</span><span class="btng"><svg><use href="#runb"/></svg></span></div>
              <div class="chk dis"><i class="cb"></i><span>Objetos seleccionados solamente</span></div>
              <div class="lbl">Unir capa</div>
              <div class="ctlrow"><div class="combo"><svg class="ci"><use href="#ptsf"/></svg><span class="c2">inside-airbnb-price [EPSG:4326]</span><b class="dd"></b></div><span class="btn3">...</span><span class="btng"><svg><use href="#runb"/></svg></span></div>
              <div class="chk dis"><i class="cb"></i><span>Objetos seleccionados solamente</span></div>
              <div class="lbl">Predicado geométrico</div>
              <div class="preds">
                <div class="chk"><i class="cb"></i><span>intersecta</span></div><div class="chk"><i class="cb"></i><span>solapa</span></div>
                <div class="chk"><i class="cb"><svg><use href="#chk"/></svg></i><span>contiene</span></div><div class="chk"><i class="cb"></i><span>dentro</span></div>
                <div class="chk"><i class="cb"></i><span>iguala</span></div><div class="chk"><i class="cb"></i><span>cruza</span></div>
                <div class="chk"><i class="cb"></i><span>toca</span></div>
              </div>
              <div class="lbl">Campos a añadir (dejar vacío para usar todos los campos) [optional]</div>
              <div class="ctlrow"><div class="input grey">0 elementos seleccionados</div><span class="btn4">...</span></div>
              <div class="lbl">Tipo de unión</div>
              <div class="ctlrow tight"><div class="combo full"><span class="c3">Crear objeto separado para cada objeto localizado (uno a muchos)</span><b class="dd"></b></div></div>
              <div class="chk"><i class="cb"></i><span class="c4">Descartar registros que no se pudieron unir</span></div>
              <div class="lbl">Prefijo de campo unido [opcional]</div>
              <div class="ctlrow"><div class="input white"></div></div>
              <div class="lbl">Capa unida</div>
              <div class="ctlrow tight"><div class="input white hint">[Crear capa temporal]</div><span class="btn4">...</span></div>
            </div>
            <div class="scroll"><b class="up"></b><i class="track"></i><i class="thumb"></i><b class="down"></b></div>
          </div>
        </div>
        <div class="dlg-split"><b class="tri-r"></b><i class="vgrip"></i></div>
        <article class="help">
          <h2>Unir atributos por<br>localización</h2>
          <p>This algorithm takes an input vector layer and<br>creates a new vector layer that is an extended<br>version of the input one, with additional attributes<br>in its attribute table.</p>
          <p>The additional attributes and their values are taken<br>from a second vector layer. A spatial criteria is<br>applied to select the values from the second layer<br>that are added to each feature from the first layer<br>in the resulting one.</p>
        </article>
      </div>
      <div class="progressrow"><div class="progress">0%</div><span class="pbtn dis">Cancelar</span></div>
      <div class="btnrow">
        <span class="pbtn batch">Ejecutar como proceso por lotes…</span>
        <span class="rbtns"><span class="pbtn run">Ejecutar</span><span class="pbtn flat">Cerrar</span><span class="pbtn">Ayuda</span></span>
      </div>
    </section>
  </section>

  <h1 class="note n1">Input polígono: cuadrícula.shp</h1>
  <h1 class="note n2">Input capa unión: airbnb.shp</h1>
  <div class="note n3">
    <h1>Guardar archivo</h1>
    <p>Si no se guarda, se crea un archivo temporal<br>que se pierde al cerrar el programa</p>
  </div>
  <svg class="arrows" viewBox="0 0 1754 1240" aria-hidden="true">
    <path d="M696 149V500M687 491l8.500 9 8.500-9"/>
    <path d="M902 201V553M893 544l9 9 9-9"/>
    <path d="M994 1044V827M985 836l9-9 9 9"/>
    <rect class="hl" x="1026.500" y="859.500" width="68" height="38"/>
  </svg>
</main>
<script src="script.js"></script>
</body>
</html>
```
FILE: styles.css
```css
* { box-sizing: border-box; }
html, body { margin: 0; padding: 0; background: #fff; }
.defs { width: 0; height: 0; position: absolute; }
.page { position: relative; width: 1754px; height: 1240px; padding: 240px 177px 0; box-shadow: inset 0 0 0 2px #ff5f57; overflow: hidden; background: #fff; }

.qgis { position: relative; width: 1400px; height: 760px; display: flex; flex-direction: column; background: #f0f0f0; font: 9.5px "Liberation Sans", Arial, sans-serif; color: #3a3a3a; filter: blur(.4px); }
.titlebar { height: 20px; background: #fff; display: flex; align-items: center; padding-left: 1px; flex: none; }
.logo { width: 15px; height: 15px; flex: none; }
.title { margin-left: 3px; color: #888; font-size: 9.4px; letter-spacing: -.2px; }
.winbtns { margin-left: auto; display: flex; gap: 24px; padding-right: 15px; color: #999; font-size: 10px; }
.menubar { height: 13px; display: flex; align-items: center; padding-left: 8px; gap: 9.8px; color: #8a8a8a; font-size: 8.6px; flex: none; padding-top: 1px; }
.toolbar { height: 23px; flex: none; display: flex; align-items: center; gap: 2.2px; padding-left: 10px; background: linear-gradient(#fafafa, #f1f1f1); border-bottom: 2px solid #c4c4c4; position: relative; }
.toolbar + .toolbar { height: 24px; }
.i { width: 16px; height: 16px; flex: none; display: block; }
.grip { width: 2px; height: 14px; margin-left: -6px; margin-right: 2px; border-left: 2px dotted #bbb; }
.sep { width: 9px; height: 14px; flex: none; background: radial-gradient(circle, #b5b5b5 .8px, transparent 1px) 4px 0 / 2px 3px repeat-y; }
.active { width: 18px; height: 18px; margin: 0 -1px; display: flex; align-items: center; justify-content: center; background: #dedede; border: 1px solid #bdbdbd; flex: none; }
.dd { display: inline-block; width: 0; height: 0; flex: none; border: 3px solid transparent; border-top: 4px solid #777; border-bottom: 0; margin: 0 1px 0 0; }

.workspace { flex: none; height: 660px; display: flex; min-height: 0; }
.sidestrip { width: 31px; flex: none; background: linear-gradient(90deg, #fff, #f0f0f0); padding-top: 0; display: flex; flex-direction: column; }
.hgrip { width: 14px; height: 2px; margin: 1px 0 4px 6px; border-top: 2px dotted #c8c8c8; }
.sideitem { height: 17.5px; display: flex; align-items: center; padding-left: 4px; gap: 2px; }
.panels { width: 293px; flex: none; display: flex; flex-direction: column; padding: 0 4px 0 1px; }
.panel { display: flex; flex-direction: column; }
.nav-panel { height: 321px; }
.layer-panel { flex: 1; min-height: 0; }
.panel-head { height: 15px; display: flex; align-items: center; justify-content: space-between; padding: 0 0 0 3px; flex: none; font-size: 9.2px; color: #333; letter-spacing: -.1px; }
.nav-panel .panel-head { height: 12px; }
.dockbtns { display: flex; gap: 2px; }
.dockbtns svg { width: 9px; height: 9px; }
.paneltools { height: 20px; display: flex; align-items: center; gap: 1.500px; padding-left: 5px; flex: none; }
.nav-panel .paneltools { margin-bottom: 3px; }
.layer-panel .paneltools { height: 21px; margin-bottom: 2px; padding-left: 4px; gap: 2.200px; }
.splitter { height: 4px; flex: none; background: radial-gradient(circle, #bbb .7px, transparent 1px) 50% 50% / 3px 2px repeat-x; }
.tree { flex: 1; background: #fff; border: 1px solid #bdbdbd; min-height: 0; color: #3c3c3c; }
.row { height: 13.1px; display: flex; align-items: center; white-space: nowrap; position: relative; padding-left: 5px; }
.nav-tree { padding-top: .5px; font-size: 9px; letter-spacing: -.3px; }
.layer-tree { font-size: 9px; letter-spacing: -.2px; }
.arr { width: 0; height: 0; flex: none; border: 2.500px solid transparent; border-left: 4px solid #666; border-right: 0; margin-right: 6px; }
.arr.none { visibility: hidden; }
.arr.open { border: 2.500px solid transparent; border-top: 4px solid #666; border-bottom: 0; width: 0; margin-right: 1px; margin-left: -1px; }
.ti { width: 15px; height: 13px; flex: none; margin-right: 3px; }
.cb { width: 10px; height: 10px; flex: none; background: #fff; border: 1px solid #cfcfcf; display: flex; }
.cb svg { width: 9px; height: 9px; }
.layer-tree .cb { margin-left: 2px; border-color: #d4d4d4; }
.layer-tree .arr.open + .cb { margin-left: 6px; }
.li { width: 11px; height: 12px; flex: none; margin: 0 6px 0 4px; }
.swatch { width: 12px; height: 11px; flex: none; margin: 0 5px 0 4px; }
.swatch.blue { background: #5c6ba3; }
.swatch.pale { background: #e8ecf7; }
.swatch.line { border-top: 1px solid #bbb; border-bottom: 1px solid #99a; }
.swatch.empty { border-left: 1px solid #ccc; border-right: 1px solid #ccc; }
.lv2 { padding-left: 19px; }
.bold { font-weight: bold; color: #222; letter-spacing: -.3px; }
.current { background: #efefef; }
.ul { text-decoration: underline; }
.off { color: #b5b5b5; font-style: italic; font-size: 9.5px; letter-spacing: 0; }
.off.upright { font-style: normal; }
.indic { width: 13px; height: 13px; position: absolute; right: 0; top: 0; }

.mapview { width: 1076px; height: 660px; background: #fff; overflow: hidden; flex: none; }
#map { display: block; }

.statusbar { height: 20px; flex: none; display: flex; align-items: center; font-size: 8.2px; letter-spacing: -.25px; color: #555; }
.locator { margin-left: 3px; width: 186px; flex: none; height: 15px; background: #fff; border: 1px solid #c4c4c4; border-radius: 2px; display: flex; align-items: center; padding-left: 4px; color: #888; gap: 4px; white-space: nowrap; letter-spacing: 0; }
.locator svg { width: 12px; height: 12px; flex: none; }
.status-right { margin-left: 595px; display: flex; align-items: center; white-space: nowrap; flex: none; }
.status-right > * { flex: none; }
.field { height: 14px; background: #fff; border: 1px solid #ccc; padding: 0 2px; display: flex; align-items: center; position: relative; color: #555; letter-spacing: 0; }
.s-coord { width: 43px; }
.f-coord { width: 65px; margin-left: 4px; }
.s-esc { width: 21px; margin-left: 9px; }
.f-esc { width: 58px; margin-left: 4px; justify-content: space-between; }
.s-lock { width: 14px; margin-left: 6px; }
.s-amp { width: 41px; margin-left: 4px; }
.f-amp { width: 63px; margin-left: 4px; }
.s-rot { width: 31px; margin-left: 6px; }
.f-rot { width: 59px; margin-left: 7px; }
.spin { position: absolute; right: 0; top: 0; width: 9px; height: 100%; background: #f2f2f2; border-left: 1px solid #ccc; display: flex; flex-direction: column; align-items: center; justify-content: center; gap: 2px; }
.spin::before { content: ""; border: 2.500px solid transparent; border-bottom: 3px solid #555; border-top: 0; }
.spin::after { content: ""; border: 2.500px solid transparent; border-top: 3px solid #555; border-bottom: 0; }
.s-cb { margin-left: 8px; }
.s-rep { width: 43px; margin-left: 3px; }
.s-crs { margin-left: 10px; }
.s-epsg { width: 39px; margin-left: 1px; }
.s-msg { margin-left: 12px; }

.dialog { position: absolute; left: 431px; top: 200px; width: 617px; height: 456px; background: #f0f0f0; border: 1px solid #1a7fc4; box-shadow: 0 0 8px rgba(0,0,0,.35); display: flex; flex-direction: column; font-size: 8.6px; letter-spacing: -.3px; color: #444; }
.dlg-title { height: 21px; background: #fff; display: flex; align-items: center; padding-left: 4px; gap: 3px; flex: none; color: #666; position: relative; font-size: 9.2px; letter-spacing: 0; }
.dlg-x { position: absolute; right: 7px; top: 4px; font-size: 11px; color: #222; font-weight: normal; }
.dlg-body { display: flex; height: 373px; flex: none; padding: 10px 0 0 9px; }
.dlg-left { width: 399px; flex: none; }
.tabs { display: flex; height: 17px; align-items: flex-end; position: relative; z-index: 1; }
.tab { height: 16px; width: 45px; display: flex; align-items: center; justify-content: center; background: #f0f0f0; border: 1px solid #c8c8c8; }
.tab.on { width: 57px; height: 17px; background: #fff; border-bottom: 0; }
.pane { height: 346px; margin-top: -1px; border: 1px solid #c8c8c8; border-right: 0; display: flex; overflow: hidden; }
.form { width: 387px; padding: 1px 0 0 3px; display: flex; flex-direction: column; flex: none; overflow: hidden; }
.lbl { height: 14px; margin-top: 3px; display: flex; align-items: center; white-space: nowrap; flex: none; }
.lbl.first { margin-top: 0; }
.ctlrow { display: flex; align-items: center; margin-top: 2px; flex: none; gap: 5px; }
.ctlrow.tight { margin-top: 1px; }
.ctlrow.c-top { margin-top: 3px; }
.preds + .lbl { margin-top: 2px; }
.combo { width: 338px; height: 16px; background: #f4f4f4; border: 1px solid #bbb; border-radius: 2px; display: flex; align-items: center; padding: 0 5px 0 3px; gap: 2px; white-space: nowrap; }
.combo.full { width: 381px; background: #f2f2f2; border-right-color: transparent; }
.combo .dd { margin-left: auto; }
.ci { width: 14px; height: 12px; flex: none; }
.c1 { letter-spacing: -.4px; }
.c2 { letter-spacing: -.85px; }
.c3 { font-size: 9px; letter-spacing: 0; }
.c4 { font-size: 9.500px; letter-spacing: 0; }
.btn3 { width: 16px; height: 14px; background: #fafafa; border: 1px solid #c4c4c4; border-radius: 2px; display: flex; align-items: center; justify-content: center; }
.btng { width: 16px; height: 16px; margin-left: 1px; background: #fafafa; border: 1px solid #c4c4c4; border-radius: 2px; }
.btng svg { width: 14px; height: 14px; display: block; }
.btn4 { width: 16px; height: 15px; background: #f5f5f5; border: 1px solid #ccc; display: flex; align-items: center; justify-content: center; }
.chk { height: 14px; margin-top: 5px; display: flex; align-items: center; gap: 4px; white-space: nowrap; flex: none; }
.chk.dis { color: #aaa; }
.chk.dis .cb { background: #ececec; }
.preds { display: grid; grid-template-columns: 53px 60px; grid-auto-rows: 14px; row-gap: 4.300px; margin-top: 1px; justify-content: start; flex: none; }
.preds .chk { margin-top: 0; }
.input { height: 15px; border: 1px solid #bbb; display: flex; align-items: center; padding-left: 2px; flex: none; white-space: nowrap; }
.grey { width: 360px; background: #eee; color: #777; font-size: 9px; letter-spacing: .45px; }
.white { width: 360px; background: #fff; }
.ctlrow > .white:only-child { width: 381px; border-right-color: transparent; }
.hint { color: #777; height: 16px; font-size: 9px; letter-spacing: -.55px; }
.scroll { width: 11px; flex: none; display: flex; flex-direction: column; align-items: stretch; border-left: 1px solid #ddd; background: #f6f6f6; }
.up, .down { height: 14px; flex: none; background: #fbfbfb; display: flex; align-items: center; justify-content: center; }
.up::before { content: ""; border: 3px solid transparent; border-bottom: 3px solid #666; border-top: 0; }
.down::before { content: ""; border: 3px solid transparent; border-top: 3px solid #666; border-bottom: 0; }
.track { flex: 1; }
.thumb { height: 61px; background: #e2e2e2; }
.dlg-split { width: 12px; flex: none; position: relative; }
.tri-r { position: absolute; left: 3px; top: 3px; border: 2.500px solid transparent; border-left: 3px solid #666; border-right: 0; }
.vgrip { position: absolute; left: 5px; top: 177px; width: 2px; height: 10px; border-left: 1px dotted #aaa; }
.help { width: 187px; height: 364px; margin-top: -1px; background: #fff; border: 1px solid #bdbdbd; padding: 4px 0 0 3px; font-size: 8.200px; line-height: 9.500px; letter-spacing: -.05px; color: #666; flex: none; white-space: nowrap; }
.help h2 { margin: 0 0 8px; font-size: 12.500px; line-height: 15.500px; font-weight: bold; color: #555; letter-spacing: .3px; }
.help p { margin: 0 0 9px; }
.progressrow { display: flex; gap: 5px; padding: 17px 0 0 9px; flex: none; }
.progress { width: 535px; height: 15px; background: #fff; border: 1px solid #ccc; border-width: 1px 0; display: flex; align-items: center; justify-content: center; }
.pbtn { width: 58px; height: 15px; background: linear-gradient(#fafafa, #ededed); border: 1px solid #c8c8c8; display: flex; align-items: center; justify-content: center; flex: none; white-space: nowrap; color: #333; }
.pbtn.dis { color: #aaa; }
.btnrow { display: flex; justify-content: space-between; padding: 6px 8px 0 9px; }
.batch { width: 125px; }
.rbtns { display: flex; gap: 5px; }
.run { width: 59px; border-color: #57a8e0; background: linear-gradient(#fff, #e8eff6); }
.flat { background: #f3f3f3; border-color: #f3f3f3; }

.note { position: absolute; margin: 0; font: 400 25px/1.2 Lato, "Noto Sans", sans-serif; letter-spacing: .35px; color: #2e3a6b; white-space: nowrap; }
.n1 { left: 696px; top: 106px; }
.n2 { left: 902px; top: 154px; }
.n3 { left: 988px; top: 1050px; }
.n3 h1 { margin: 0; font: inherit; }
.n3 p { margin: 11px 0 0; font-size: 30px; line-height: 35px; font-style: italic; font-weight: 300; letter-spacing: .25px; }
.arrows { position: absolute; left: 0; top: 0; width: 1754px; height: 1240px; pointer-events: none; fill: none; stroke: #2e3a6b; stroke-width: 2; }
```
FILE: script.js
```js
(function () {
  var cv = document.getElementById('map');
  var c = cv.getContext('2d');
  var OX = 501, OY = 320;
  c.translate(-OX, -OY);
  var seed = 12345;
  function r() { seed = (seed * 16807) % 2147483647; return seed / 2147483647; }

  c.fillStyle = '#fff';
  c.fillRect(OX, OY, 1076, 660);

  function poly(pts) {
    c.beginPath();
    pts.forEach(function (p, i) { i ? c.lineTo(p[0], p[1]) : c.moveTo(p[0], p[1]); });
    c.closePath();
    c.fill();
  }
  c.fillStyle = '#e9edf7';
  poly([[506, 320], [983, 320], [975, 335], [1000, 350], [1010, 378], [1035, 395], [1100, 398], [1153, 421], [1185, 425],
    [1205, 400], [1238, 392], [1286, 395], [1294, 436], [1312, 450], [1330, 502], [1345, 560], [1333, 600], [1280, 622], [1233, 642],
    [1180, 640], [1180, 500], [620, 540], [560, 540], [556, 402], [525, 368], [506, 350]]);
  poly([[1275, 705], [1330, 690], [1368, 730], [1372, 830], [1330, 884], [1285, 900], [1230, 900], [1180, 980], [1130, 980], [1118, 896], [1225, 880], [1285, 800]]);
  poly([[845, 896], [1140, 896], [1120, 980], [838, 980]]);
  poly([[1225, 896], [1240, 870], [1280, 905], [1240, 980], [1150, 980], [1130, 896]]);

  c.strokeStyle = '#fff';
  c.lineWidth = 1;
  [[[590, 390], [640, 420], [700, 480]], [[815, 360], [830, 420], [850, 440]], [[1090, 400], [1120, 440]], [[1240, 520], [1300, 560]]].forEach(function (l) {
    c.beginPath();
    l.forEach(function (p, i) { i ? c.lineTo(p[0], p[1]) : c.moveTo(p[0], p[1]); });
    c.stroke();
  });

  var clusters = [
    [716, 360, 22, 42, 130], [945, 335, 14, 16, 40], [935, 408, 60, 36, 800], [1045, 415, 25, 12, 170], [985, 432, 30, 10, 120],
    [585, 512, 28, 16, 110], [915, 935, 70, 48, 1500], [1000, 940, 30, 40, 160],
    [1278, 610, 28, 14, 150], [1240, 602, 14, 12, 90], [1315, 610, 20, 8, 50], [1240, 520, 10, 25, 45], [1330, 560, 14, 16, 40], [1250, 465, 6, 15, 25],
    [1305, 700, 16, 30, 16], [1320, 800, 30, 40, 20], [1240, 930, 30, 30, 30]
  ];
  clusters.forEach(function (k) {
    for (var i = 0; i < k[4]; i++) {
      var a = r() * 6.283, d = Math.sqrt(r());
      var x = k[0] + Math.cos(a) * d * k[2], y = k[1] + Math.sin(a) * d * k[3];
      var g = r();
      c.fillStyle = g < .12 ? 'rgba(70,85,150,.9)' : g < .6 ? 'rgba(90,105,165,.6)' : 'rgba(110,125,180,.4)';
      c.fillRect(Math.round(x), Math.round(y), 1 + (r() < .3 ? 1 : 0), 1 + (r() < .3 ? 1 : 0));
    }
  });
  c.fillStyle = '#5b6ba5';
  [[1327, 552, 6, 9], [1277, 606, 12, 8], [1232, 512, 2, 10], [1240, 611, 4, 6]].forEach(function (b) { c.fillRect(b[0], b[1], b[2], b[3]); });

  function dots(list, col, rad) {
    c.fillStyle = col;
    list.forEach(function (p) { c.beginPath(); c.arc(p[0], p[1], rad, 0, 6.283); c.fill(); });
  }
  var g = [[914, 391], [917, 396], [916, 399], [963, 403], [915, 421], [933, 423], [968, 421], [987, 412], [1020, 433], [1027, 435], [967, 439], [934, 434], [1119, 438], [1230, 601], [1232, 608], [1232, 613], [1288, 720], [573, 517], [580, 520], [600, 519]];
  var dg = [[893, 423], [981, 403], [971, 433], [1227, 618]];
  var rd = [[976, 406], [993, 412], [973, 415], [974, 419], [980, 426], [939, 409], [1021, 408], [901, 413], [937, 433], [897, 439], [1026, 432], [1246, 452], [1247, 600], [563, 515], [594, 517], [567, 782]];
  var br = [[906, 409], [931, 415], [912, 419], [966, 384], [990, 394], [979, 396], [988, 406], [943, 433], [1056, 412], [1128, 438], [925, 372], [985, 420]];
  for (var i = 0; i < 35; i++) g.push([865 + r() * 105, 905 + r() * 70]);
  for (i = 0; i < 10; i++) dg.push([865 + r() * 110, 900 + r() * 75]);
  for (i = 0; i < 9; i++) rd.push([860 + r() * 100, 905 + r() * 70]);
  for (i = 0; i < 6; i++) br.push([880 + r() * 100, 905 + r() * 70]);
  dots(br, '#8a7650', 2.6);
  dots(dg, '#2f9a2f', 2.3);
  dots(g, '#33dd33', 2.4);
  dots(rd, '#b3245c', 2.5);

  var x, y, k;
  for (k = 0, x = 508; x < 1577; x += 15.05, k++) {
    c.fillStyle = k % 4 === 2 ? '#333' : '#555';
    c.fillRect(Math.round(x), OY, k % 4 === 2 ? 2 : 1, 660);
  }
  for (k = 0, y = 320; y < 980; y += 15, k++) {
    var m = k % 6;
    if (m === 3 || m === 5 || m === 1) {
      c.fillStyle = '#5a5a5a';
      c.fillRect(OX, y, 1076, 2);
    } else {
      c.fillStyle = m === 4 ? '#aaa' : '#3a3a3a';
      c.fillRect(OX, y, 1076, 1);
    }
  }
})();
```
